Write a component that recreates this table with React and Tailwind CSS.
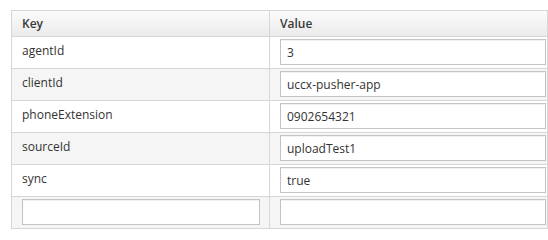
import React from "react";

const rows = [
  { k: "agentId", v: "3" },
  { k: "clientId", v: "uccx-pusher-app" },
  { k: "phoneExtension", v: "0902654321" },
  { k: "sourceId", v: "uploadTest1" },
  { k: "sync", v: "true" },
];

function Input({ value, w }) {
  return (
    <input
      readOnly
      value={value}
      className={`${w} h-[26px] mt-[2px] border border-[#c3c3c3] bg-white px-[6px] text-[12px] text-[#333] outline-none shadow-[inset_0_1px_1px_rgba(0,0,0,0.06)]`}
      style={{ fontFamily: '"Open Sans", sans-serif' }}
    />
  );
}

export default function App() {
  return (
    <div
      className="pl-[11px] pt-[10px] bg-white w-[548px] h-[240px] overflow-hidden"
      style={{ fontFamily: '"Open Sans", sans-serif' }}
    >
      <div className="w-[537px] border border-[#d6d6d6] text-[12px] text-[#333]">
        <div className="flex h-[26px] border-b border-[#d6d6d6] bg-gradient-to-b from-[#fbfbfb] to-[#ebebeb]">
          <div className="w-[258px] border-r border-[#d6d6d6] pl-[10px] pt-[4px] font-semibold text-[#3a3a3a]">
            Key
          </div>
          <div className="flex-1 pl-[10px] pt-[4px] font-semibold text-[#3a3a3a]">Value</div>
        </div>
        {rows.map((r, i) => (
          <div
            key={r.k}
            className={`flex h-[32px] border-b border-[#d6d6d6] ${i % 2 === 1 ? "bg-[#f5f5f5]" : "bg-white"}`}
          >
            <div className="w-[258px] border-r border-[#d6d6d6] pl-[10px] pt-[5px]">{r.k}</div>
            <div className="flex-1 pl-[10px]">
              <Input value={r.v} w="w-[266px]" />
            </div>
          </div>
        ))}
        <div className="flex h-[31px] bg-[#f5f5f5]">
          <div className="w-[258px] border-r border-[#d6d6d6] pl-[10px]">
            <Input value="" w="w-[238px]" />
          </div>
          <div className="flex-1 pl-[10px]">
            <Input value="" w="w-[266px]" />
          </div>
        </div>
      </div>
    </div>
  );
}
